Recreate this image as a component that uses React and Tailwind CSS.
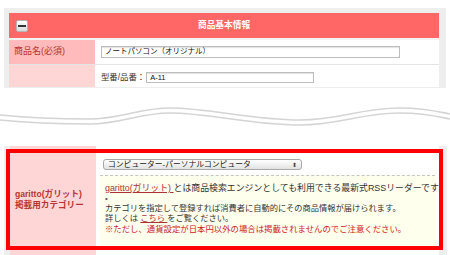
import React from 'react';

const jp = "font-['Liberation_Sans','Noto_Sans_CJK_JP',sans-serif]";

const Wave = () => (
    <svg width="450" height="58" viewBox="0 88 450 58" className="block">
        <path
            d="M0,115 C30,118 60,119 90,119 C120,119 140,108 170,108 C210,108 250,120 300,120 C340,120 360,108 400,108 C425,108 440,112 450,114"
            fill="none"
            stroke="#d4d4d4"
            strokeWidth="1.6"
        />
        <path
            d="M0,120 C30,123 60,124 90,124 C120,124 140,113 170,113 C210,113 250,125 300,125 C340,125 360,113 400,113 C425,113 440,117 450,119"
            fill="none"
            stroke="#d4d4d4"
            strokeWidth="1.6"
        />
    </svg>
);

const App = () => {
    return (
        <div className={`w-[450px] h-[255px] bg-white overflow-hidden ${jp}`}>
            <div className="h-[8px]" />

            {/* top panel */}
            <div className="ml-[4px] w-[442px] h-[80px] bg-[#eeeeee] pt-[5px] pl-[5px] pr-[7px]">
                <div className="flex h-[25px] bg-[#ff6666] items-center">
                    <div className="w-[28px] pl-[7px] flex items-center">
                        <div className="w-[12px] h-[12px] rounded-[2px] border border-[#b5b5b5] bg-gradient-to-b from-white to-[#d8d8d8] flex items-center justify-center">
                            <div className="w-[8px] h-[2px] bg-[#333333]" />
                        </div>
                    </div>
                    <div className="flex-1 text-center text-white font-bold text-[8.7px] leading-none">商品基本情報</div>
                    <div className="w-[28px]" />
                </div>
                <div className="h-[2px] bg-[#f3f3f3]" />
                <div className="flex h-[25px] border-b border-[#e4e4e4]">
                    <div className="w-[86px] shrink-0 bg-[#ffbbbb] flex items-center pl-[5px] text-[9px] text-[#b83333]">商品名(必須)</div>
                    <div className="flex-1 bg-white flex items-center pl-[6px]">
                        <div className="w-[299px] h-[12px] border border-[#bdbdbd] shadow-[inset_0_1px_1px_rgba(0,0,0,0.12)] bg-white flex items-center pl-[3px] text-[7.5px] text-[#111111] leading-none">
                            ノートパソコン（オリジナル）
                        </div>
                    </div>
                </div>
                <div className="flex h-[22px]">
                    <div className="w-[86px] shrink-0 bg-[#ffd6d6]" />
                    <div className="flex-1 bg-white flex items-start pt-[7px] pl-[6px] gap-[1px]">
                        <span className="text-[8.4px] leading-[11px] text-[#333333]">型番/品番：</span>
                        <div className="w-[168px] h-[11px] border border-[#bdbdbd] shadow-[inset_0_1px_1px_rgba(0,0,0,0.12)] bg-white flex items-center pl-[3px] text-[7.5px] text-[#111111] leading-none">
                            A-11
                        </div>
                    </div>
                </div>
            </div>

            <Wave />

            {/* bottom panel */}
            <div className="ml-[4px] w-[443px] h-[109px] bg-[#eeeeee] flex flex-col">
                <div className="flex h-[3px] ml-[6px] w-[429px]">
                    <div className="w-[86px] shrink-0 bg-[#ffd6d6]" />
                    <div className="flex-1 bg-white" />
                </div>
                <div className="ml-[2px] w-[437px] h-[101px] border-4 border-[#ff0000] flex">
                    <div className="w-[86px] shrink-0 bg-[#ffd6d6] flex flex-col justify-center pl-[5px] text-[8.6px] leading-[11px] font-bold text-[#b83333] whitespace-nowrap">
                        <span>garitto(ガリット)</span>
                        <span>掲載用カテゴリー</span>
                    </div>
                    <div className="flex-1 min-w-0 bg-white flex flex-col">
                        <div className="pt-[6px] pl-[7px] h-[22px]">
                            <div className="w-[199px] h-[11px] rounded-[3px] border border-[#a8a8a8] bg-gradient-to-b from-white to-[#e2e2e2] flex items-center justify-between pl-[4px] pr-[4px] text-[7.8px] leading-none text-[#222222]">
                                <span>コンピューター-パーソナルコンピュータ</span>
                                <span className="text-[6px] text-[#444444]">⬍</span>
                            </div>
                        </div>
                        <div className="mx-[4px] flex-1 border-t border-dashed border-[#c4c4c4] bg-[#ffffee] pl-[5px] pt-[7px] text-[8.25px] text-[#333333]">
                            <div className="leading-[10px] whitespace-nowrap text-[8.9px]">
                                <span className="text-[#aa3333] underline">garitto(ガリット) </span>
                                とは商品検索エンジンとしても利用できる最新式RSSリーダーです
                            </div>
                            <div className="leading-[11px] h-[11px] text-[8px] text-[#555555]">•</div>
                            <div className="leading-[10px] whitespace-nowrap">カテゴリを指定して登録すれば消費者に自動的にその商品情報が届けられます。</div>
                            <div className="leading-[10px] whitespace-nowrap">
                                詳しくは <span className="text-[#aa3333] underline">こちら </span>をご覧ください。
                            </div>
                            <div className="leading-[10px] whitespace-nowrap text-[8.4px] text-[#cc2222]">※ただし、通貨設定が日本円以外の場合は掲載されませんのでご注意ください。</div>
                        </div>
                    </div>
                </div>
                <div className="flex h-[5px] ml-[6px] w-[429px]">
                    <div className="w-[86px] shrink-0 bg-[#ffd6d6]" />
                    <div className="flex-1 bg-white" />
                </div>
            </div>
        </div>
    );
};

export default App;
